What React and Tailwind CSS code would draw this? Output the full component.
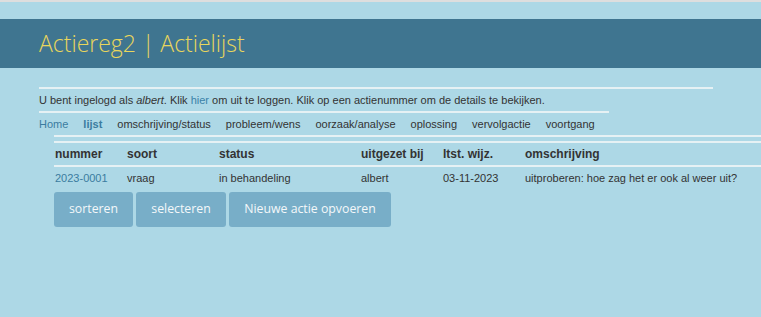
import React from "react";

const navItems = [
  "omschrijving/status",
  "probleem/wens",
  "oorzaak/analyse",
  "oplossing",
  "vervolgactie",
  "voortgang",
];

const columns = [
  { label: "nummer", width: "w-[72px]" },
  { label: "soort", width: "w-[92px]" },
  { label: "status", width: "w-[142px]" },
  { label: "uitgezet bij", width: "w-[82px]" },
  { label: "ltst. wijz.", width: "w-[82px]" },
  { label: "omschrijving", width: "flex-1" },
];

const row = ["2023-0001", "vraag", "in behandeling", "albert", "03-11-2023", "uitproberen: hoe zag het er ook al weer uit?"];

const App = () => {
  return (
    <div className="min-h-[317px] bg-[#add8e6] font-['Liberation_Sans',Arial,sans-serif] text-[#333]">
      <div className="h-[2px] bg-[#dedede]" />
      <div className="h-[17px]" />
      <div className="flex h-[49px] items-center bg-[#3f7590] pl-[39px]">
        <h1 className="font-['Open_Sans',sans-serif] text-[23px] font-light text-[#e9d65c]">
          Actiereg2 | Actielijst
        </h1>
      </div>
      <div className="pl-[39px] pt-[19px]">
        <div className="h-[2px] w-[674px] bg-[#e6f1f4]" />
        <p className="py-[4px] text-[11px] leading-[14px]">
          U bent ingelogd als <em>albert</em>. Klik <a className="text-[#3b82a8]">hier</a> om uit te loggen. Klik op
          een actienummer om de details te bekijken.
        </p>
        <div className="h-[2px] w-[570px] bg-[#e6f1f4]" />
        <nav className="flex gap-[15px] py-[4px] text-[11px] leading-[14px]">
          <a className="text-[#3b7ca0]">Home</a>
          <a className="font-bold text-[#3b7ca0]">lijst</a>
          {navItems.map(item => (
            <span key={item}>{item}</span>
          ))}
        </nav>
      </div>
      <div className="ml-[54px]">
        <div className="h-[2px] bg-[#e6f1f4]" />
        <div className="h-[4px]" />
        <div className="h-[2px] bg-[#e6f1f4]" />
        <div className="flex h-[22px] items-center pl-[1px] text-[12px] font-bold text-[#333]">
          {columns.map(col => (
            <div key={col.label} className={col.width}>
              {col.label}
            </div>
          ))}
        </div>
        <div className="h-[2px] bg-[#e6f1f4]" />
        <div className="flex h-[22px] items-center pl-[1px] text-[11px] text-[#333]">
          {row.map((cell, i) => (
            <div key={i} className={columns[i].width}>
              {i === 0 ? <a className="text-[#3b7ca0]">{cell}</a> : cell}
            </div>
          ))}
        </div>
        <div className="flex gap-[3px] pt-[3px] font-['Open_Sans',sans-serif] text-[12.3px] text-[#f4f8fa]">
          <button className="h-[35px] w-[79px] rounded-[3px] bg-[#78aec8]">sorteren</button>
          <button className="h-[35px] w-[90px] rounded-[3px] bg-[#78aec8]">selecteren</button>
          <button className="h-[35px] w-[162px] rounded-[3px] bg-[#78aec8]">Nieuwe actie opvoeren</button>
        </div>
      </div>
    </div>
  );
};

export default App;
